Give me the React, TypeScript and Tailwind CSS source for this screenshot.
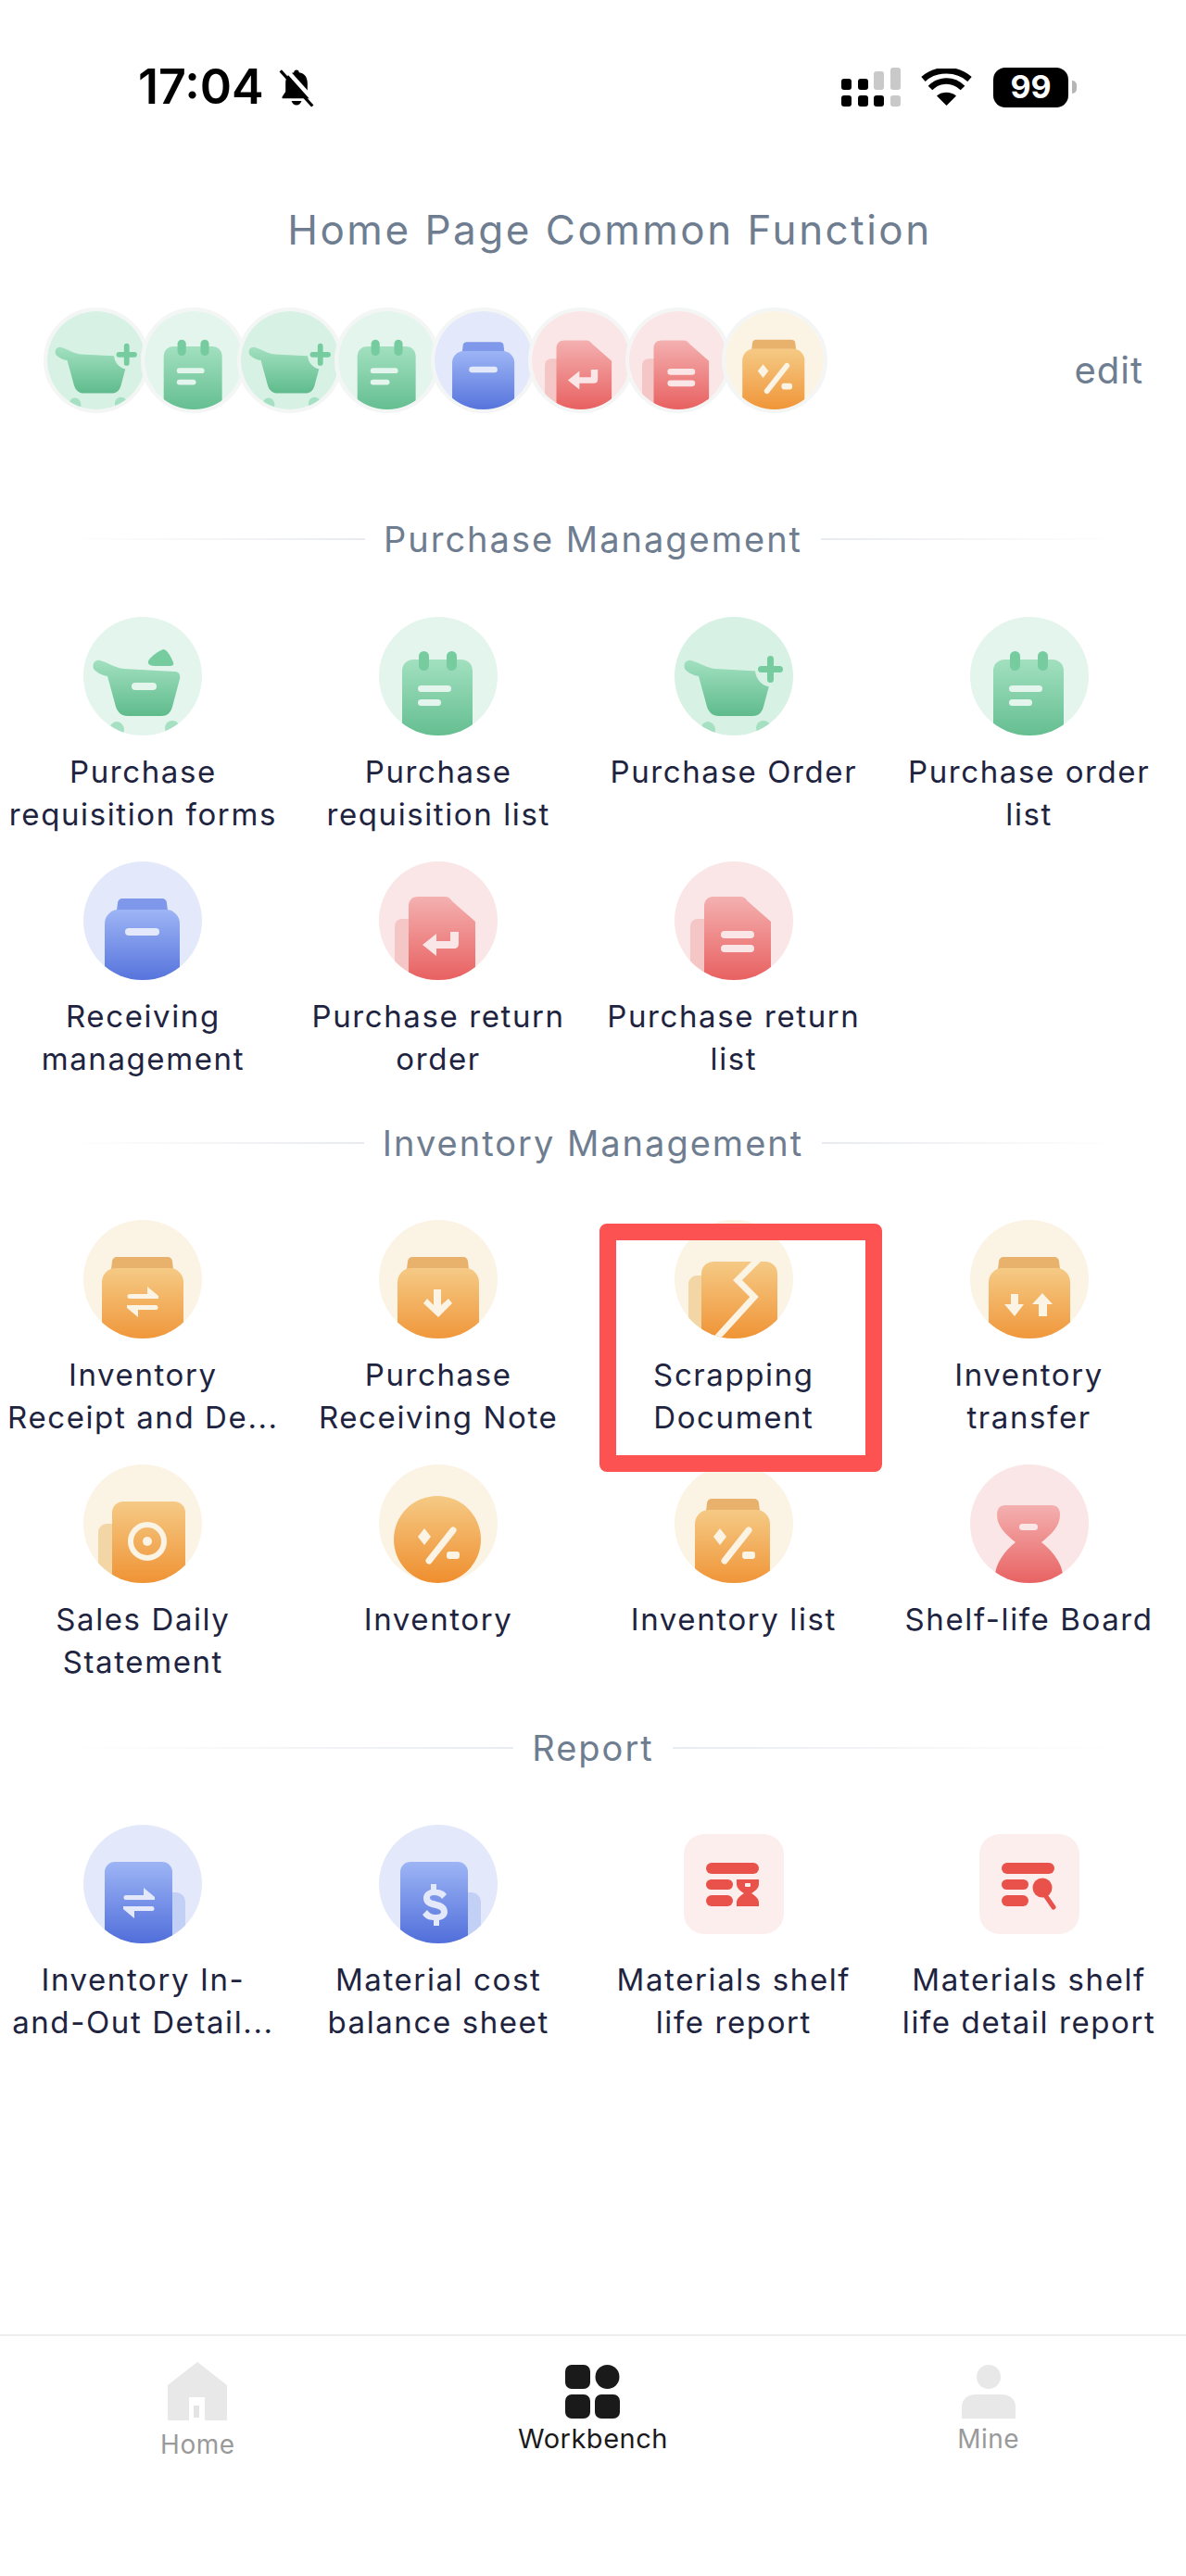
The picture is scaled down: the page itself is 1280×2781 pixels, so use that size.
import React, { useId } from "react";

type Tone = "green" | "greenLight" | "blue" | "red" | "orange";

const tones: Record<Tone, { bg: string; from: string; to: string; soft: string; lid: string }> = {
  green: { bg: "#d7f2e4", from: "#a2e0c0", to: "#5fbb8c", soft: "#a5e0c2", lid: "#76cc9f" },
  greenLight: { bg: "#e3f5ec", from: "#a2e0c0", to: "#5fbb8c", soft: "#a5e0c2", lid: "#76cc9f" },
  blue: { bg: "#e3e9fb", from: "#9db5f5", to: "#4a68d8", soft: "#c3d0f5", lid: "#7f98ea" },
  red: { bg: "#fae6e6", from: "#f4b0b0", to: "#e85f5f", soft: "#f5c6c6", lid: "#ee9d9d" },
  orange: { bg: "#fbf3e4", from: "#f5ca85", to: "#ef8e2e", soft: "#f3d6a6", lid: "#e9b26c" },
};

type Kind =
  | "cartLeaf"
  | "cartPlus"
  | "calendar"
  | "jarMinus"
  | "docReturn"
  | "docList"
  | "jarSwap"
  | "jarDown"
  | "scrap"
  | "jarUpDown"
  | "sales"
  | "eggPercent"
  | "jarPercent"
  | "hourglass"
  | "docSwap"
  | "docDollar";

const toneOf: Record<Kind, Tone> = {
  cartLeaf: "greenLight",
  cartPlus: "green",
  calendar: "greenLight",
  jarMinus: "blue",
  docReturn: "red",
  docList: "red",
  jarSwap: "orange",
  jarDown: "orange",
  scrap: "orange",
  jarUpDown: "orange",
  sales: "orange",
  eggPercent: "orange",
  jarPercent: "orange",
  hourglass: "red",
  docSwap: "blue",
  docDollar: "blue",
};

const Percent = ({ c }: { c: string }) => (
  <g fill={c}>
    <path d="M49 69l7 9-7 9-7-9z" />
    <path d="M80 71L54 104" stroke={c} strokeWidth="7" strokeLinecap="round" />
    <rect x="73" y="94" width="14" height="8" rx="3" />
  </g>
);

const SwapArrows = ({ c, x, y }: { c: string; x: number; y: number }) => (
  <g transform={`translate(${x} ${y})`} fill={c}>
    <path d="M3 8h19V0l12 10v3H3a2.500 2.500 0 0 1 0-5z" />
    <path d="M31 25H12v8L0 23v-3h31a2.500 2.500 0 0 1 0 5z" />
  </g>
);

const Jar = ({ x, w, lx, lw, top, fill, lid }: { x: number; w: number; lx: number; lw: number; top: number; fill: string; lid: string }) => (
  <>
    <path d={`M${lx + 5} ${top}h${lw - 10}a5 5 0 0 1 5 5l1 8h-${lw + 2}l1-8a5 5 0 0 1 5-5z`} fill={lid} />
    <rect x={x} y={top + 12} width={w} height="90" rx="15" fill={fill} />
  </>
);

// the app's round icon art, in a 128 box
const FnIcon = ({ kind, size = 128 }: { kind: Kind; size?: number }) => {
  const id = useId();
  const t = tones[toneOf[kind]];
  const g = `url(#${id}g)`;
  const bg = t.bg;

  const art = () => {
    switch (kind) {
      case "cartLeaf":
      case "cartPlus":
        return (
          <>
            <path
              d="M18 47C26 49 34 55 44 56L98 59C103 59 105 62 104 67L96 97C94 104 90 107 84 107H48C41 107 37 103 35 97L26 64C20 63 14 60 11 56C9 50 13 46 18 47z"
              fill={g}
            />
            <ellipse cx="36" cy="122" rx="8" ry="9" fill={t.soft} />
            <ellipse cx="96" cy="120" rx="8" ry="8" fill={t.soft} />
            {kind === "cartLeaf" ? (
              <>
                <path d="M71 46c3-4 10-9 15-11 4 0 8 7 11 14 1 3-1 4-4 4H77c-6 0-9-3-6-7z" fill={t.lid} />
                <rect x="52" y="71" width="27" height="8" rx="4" fill={bg} />
              </>
            ) : (
              <>
                <circle cx="106" cy="57" r="19" fill={bg} />
                <path d="M100 45.500a3.500 3.500 0 0 1 7 0V53h6.500a3.500 3.500 0 0 1 0 7H107v7.500a3.500 3.500 0 0 1-7 0V60h-6.500a3.500 3.500 0 0 1 0-7h6.500z" fill={t.lid} />
              </>
            )}
          </>
        );
      case "calendar":
        return (
          <>
            <rect x="25" y="46" width="76" height="90" rx="12" fill={g} />
            <rect x="43" y="37" width="11" height="21" rx="5.500" fill={t.lid} />
            <rect x="73" y="37" width="11" height="21" rx="5.500" fill={t.lid} />
            <rect x="42" y="74" width="36" height="7" rx="3.500" fill={bg} />
            <rect x="42" y="89" width="25" height="7" rx="3.500" fill={bg} />
          </>
        );
      case "jarMinus":
        return (
          <>
            <Jar x={23} w={81} lx={37} lw={53} top={40} fill={g} lid={t.lid} />
            <rect x="45" y="72" width="37" height="8" rx="4" fill={bg} />
          </>
        );
      case "docReturn":
      case "docList":
        return (
          <>
            <rect x="17" y="62" width="30" height="70" rx="8" fill={t.soft} />
            <path d="M42 38h29c4 0 6 2 8 5l25 22v65H32V48c0-6 4-10 10-10z" fill={g} />
            {kind === "docReturn" ? (
              <path d="M86 76v13c0 3-2 5-5 5H62v8L47 90l15-12v8h15V76z" fill={bg} />
            ) : (
              <>
                <rect x="50" y="75" width="36" height="8" rx="4" fill={bg} />
                <rect x="50" y="90" width="36" height="8" rx="4" fill={bg} />
              </>
            )}
          </>
        );
      case "jarSwap":
      case "jarDown":
      case "jarUpDown":
        return (
          <>
            <Jar x={20} w={88} lx={31} lw={65} top={40} fill={g} lid={t.lid} />
            {kind === "jarSwap" && <SwapArrows c={bg} x={47} y={72} />}
            {kind === "jarDown" && <path d="M59 75h8v17l8-7 4 5-15 15-16-15 4-5 7 7z" fill={bg} />}
            {kind === "jarUpDown" && (
              <>
                <path d="M44 80h8v11h6L48 104 37 91h7z" fill={bg} />
                <path d="M74 104h9V91h6L78 79 67 91h7z" fill={bg} />
              </>
            )}
          </>
        );
      case "scrap":
        return (
          <>
            <rect x="15" y="60" width="30" height="72" rx="9" fill={t.soft} />
            <rect x="29" y="45" width="82" height="92" rx="13" fill={g} />
            <path d="M91 42L68 65l18 18-40 44" fill="none" stroke={bg} strokeWidth="7" />
          </>
        );
      case "sales":
        return (
          <>
            <rect x="16" y="64" width="30" height="70" rx="9" fill={t.soft} />
            <rect x="31" y="40" width="79" height="96" rx="12" fill={g} />
            <circle cx="69" cy="83" r="18" fill="none" stroke={bg} strokeWidth="6" />
            <circle cx="69" cy="83" r="5" fill={bg} />
          </>
        );
      case "eggPercent":
        return (
          <>
            <circle cx="63" cy="81" r="47" fill={g} />
            <Percent c={bg} />
          </>
        );
      case "jarPercent":
        return (
          <>
            <Jar x={22} w={81} lx={35} lw={56} top={37} fill={g} lid={t.lid} />
            <Percent c={bg} />
          </>
        );
      case "hourglass":
        return (
          <>
            <path
              d="M38 44h50c6 0 9 4 9 10 0 13-9 21-20 30 12 9 23 24 23 36v12H27v-12c0-12 10-27 22-36-11-9-20-17-20-30 0-6 3-10 9-10z"
              fill={g}
            />
            <rect x="53" y="64" width="20" height="7" rx="3.500" fill={bg} />
          </>
        );
      case "docSwap":
      case "docDollar":
        return (
          <>
            <rect x="70" y="73" width="40" height="60" rx="10" fill={t.soft} />
            <rect x="23" y="40" width="73" height="96" rx="11" fill={g} />
            {kind === "docSwap" ? (
              <SwapArrows c={bg} x={43} y={68} />
            ) : (
              <path
                d="M56 64h6v6c5 0 9 2 11 5l-5 5c-2-3-5-4-8-4-4 0-5 1-5 3 0 5 19 2 19 15 0 5-4 8-9 9v6h-6v-6c-6 0-10-3-12-6l5-5c2 3 5 5 9 5s6-1 6-3c0-6-19-2-19-15 0-5 4-8 8-9z"
                fill={bg}
              />
            )}
          </>
        );
    }
  };

  return (
    <svg width={size} height={size} viewBox="0 0 128 128" className="block">
      <defs>
        <linearGradient id={`${id}g`} x1="0" y1="0" x2="0" y2="1">
          <stop offset="0" stopColor={t.from} />
          <stop offset="1" stopColor={t.to} />
        </linearGradient>
        <clipPath id={`${id}c`}>
          <circle cx="64" cy="64" r="64" />
        </clipPath>
      </defs>
      <circle cx="64" cy="64" r="64" fill={bg} />
      <g clipPath={`url(#${id}c)`}>{art()}</g>
    </svg>
  );
};

const ReportIcon = ({ search }: { search?: boolean }) => (
  <div className="flex h-[128px] items-center justify-center">
    <svg width="108" height="108" viewBox="0 0 108 108" className="block">
      <rect width="108" height="108" rx="22" fill="#fdeeee" />
      <g fill="#e9524a">
        <rect x="24" y="31" width="57" height="12" rx="6" />
        <rect x="24" y="49" width="29" height="11" rx="5.500" />
        <rect x="24" y="66" width="29" height="12" rx="6" />
        {search ? (
          <>
            <circle cx="68" cy="58" r="10.500" />
            <path d="M71 66l9 13" stroke="#e9524a" strokeWidth="5" strokeLinecap="round" />
          </>
        ) : (
          <path d="M57 49h24v5c0 5-5 8-8 10 3 2 8 5 8 10v4H57v-4c0-5 5-8 8-10-3-2-8-5-8-10z" />
        )}
      </g>
      {!search && <rect x="66" y="53" width="6" height="4" rx="1" fill="#fdeeee" />}
    </svg>
  </div>
);

const Cell = ({ icon, lines }: { icon: React.ReactNode; lines: string[] }) => (
  <div className="flex h-[264px] flex-col items-center">
    {icon}
    <div className="mt-[16px] text-center text-[33px] leading-[46px] tracking-[1.6px] whitespace-nowrap text-[#1e2440]">
      {lines.map((l) => (
        <div key={l}>{l}</div>
      ))}
    </div>
  </div>
);

const Grid = ({ items }: { items: { kind?: Kind; report?: "hourglass" | "search"; lines: string[] }[] }) => (
  <div className="ml-[-5px] grid w-[1275px] grid-cols-4">
    {items.map((it) => (
      <Cell
        key={it.lines.join(" ")}
        lines={it.lines}
        icon={it.kind ? <FnIcon kind={it.kind} /> : <ReportIcon search={it.report === "search"} />}
      />
    ))}
  </div>
);

const SectionTitle = ({ title }: { title: string }) => (
  <div className="flex h-[46px] items-center justify-center gap-[20px] px-[70px]">
    <div className="h-[2px] flex-1 bg-gradient-to-r from-white to-[#e8ebef]" />
    <div className="text-[38px] leading-[46px] tracking-[2px] text-[#6f7d90]">{title}</div>
    <div className="h-[2px] flex-1 bg-gradient-to-r from-[#e8ebef] to-white" />
  </div>
);

const StatusBar = () => (
  <div className="flex h-[188px] items-start justify-between pt-[72px] pr-[118px] pl-[149px]">
    <div className="flex h-[44px] items-center gap-[15px]">
      <span className="text-[52px] leading-none font-semibold text-black">17:04</span>
      <svg width="40" height="43" viewBox="0 0 44 44">
        <path d="M22 1c2 0 3 1 3 3 7 1 10 6 10 13v10l4 6v2H5v-2l4-6V17C9 10 12 5 19 4c0-2 1-3 3-3z" fill="#000" />
        <path d="M16 38h12c-1 3-3 5-6 5s-5-2-6-5z" fill="#000" />
        <path d="M9 0l35 39" stroke="#fff" strokeWidth="5" />
        <path d="M3 2l38 42" stroke="#000" strokeWidth="3.500" />
      </svg>
    </div>
    <div className="flex h-[44px] items-center">
      <svg width="64" height="42" viewBox="0 0 64 42">
        <g fill="#000">
          <rect x="0" y="12" width="11" height="12" rx="3" />
          <rect x="18" y="12" width="11" height="12" rx="3" />
          <rect x="0" y="30" width="11" height="12" rx="3" />
          <rect x="18" y="30" width="11" height="12" rx="3" />
          <rect x="35" y="30" width="11" height="12" rx="3" />
        </g>
        <g fill="#c9c9c9">
          <rect x="35" y="4" width="11" height="20" rx="3" />
          <rect x="53" y="0" width="11" height="24" rx="3" />
          <rect x="53" y="30" width="11" height="12" rx="3" />
        </g>
      </svg>
      <svg className="ml-[22px]" width="55" height="40" viewBox="0 0 55 40">
        <path d="M27.500 40L17 29.500c6-5 15-5 21 0z" fill="#000" />
        <path d="M10 21C20 11 35 11 45 21" fill="none" stroke="#000" strokeWidth="6.500" />
        <path d="M2.500 11.500C16 -1 39 -1 52.500 11.500" fill="none" stroke="#000" strokeWidth="6.500" />
      </svg>
      <div className="ml-[23px] flex items-center">
        <div className="flex h-[43px] w-[81px] items-center justify-center rounded-[13px] bg-black text-[34px] leading-none font-bold text-white">
          99
        </div>
        <div className="ml-[4px] h-[14px] w-[5px] rounded-r-full bg-[#b5b5b5]" />
      </div>
    </div>
  </div>
);

const TabBar = () => (
  <div className="mt-auto h-[261px] border-t-[2px] border-[#eeeeee]">
    <div className="grid grid-cols-3 pt-[28px]">
      <div className="flex flex-col items-center">
        <svg width="64" height="63" viewBox="0 0 64 63">
          <path d="M32 0L64 25v38H40V38H23v25H0V25z" fill="#e8e8e8" />
          <rect x="28" y="47" width="6" height="13" fill="#e4e4e4" />
        </svg>
        <span className="mt-[9px] text-[28px] leading-[34px] tracking-[0.5px] text-[#9a9a9a]">Home</span>
      </div>
      <div className="flex flex-col items-center pt-[3px]">
        <svg width="59" height="58" viewBox="0 0 59 58">
          <g fill="#1a1a1a">
            <rect x="0" y="0" width="27" height="26" rx="7" />
            <circle cx="45.500" cy="13" r="13" />
            <rect x="0" y="32" width="27" height="26" rx="7" />
            <rect x="32" y="32" width="27" height="26" rx="7" />
          </g>
        </svg>
        <span className="mt-[5px] text-[29px] leading-[34px] tracking-[0.5px] text-[#1a1a1a]">Workbench</span>
      </div>
      <div className="flex flex-col items-center pt-[3px]">
        <svg width="58" height="58" viewBox="0 0 58 58">
          <ellipse cx="29" cy="13" rx="13" ry="13" fill="#e8e8e8" />
          <path d="M0 58V45c0-9 8-13 15-13h28c7 0 15 4 15 13v13z" fill="#e8e8e8" />
        </svg>
        <span className="mt-[5px] text-[28px] leading-[34px] tracking-[0.5px] text-[#9a9a9a]">Mine</span>
      </div>
    </div>
  </div>
);

const common: Kind[] = ["cartPlus", "calendar", "cartPlus", "calendar", "jarMinus", "docReturn", "docList", "jarPercent"];

export default function App() {
  return (
    <div className="relative flex h-[2781px] w-[1280px] flex-col overflow-hidden bg-white font-['Inter',sans-serif]">
      <StatusBar />

      <div className="mt-[36px] pl-[36px] text-center text-[44px] leading-[48px] tracking-[2.5px] text-[#6f7d90]">
        Home Page Common Function
      </div>

      <div className="mt-[60px] flex items-center justify-between pr-[46px] pl-[47px]">
        <div className="flex">
          {common.map((k, i) => (
            <div key={i} className="mr-[-9.4px] rounded-full border-[4px] border-[#f4f5f5] bg-white">
              <FnIcon kind={k} size={106} />
            </div>
          ))}
        </div>
        <span className="mt-[22px] text-[40px] leading-[46px] tracking-[1px] text-[#6f7d90]">edit</span>
      </div>

      <div className="mt-[113px]">
        <SectionTitle title="Purchase Management" />
      </div>
      <div className="mt-[61px]">
        <Grid
          items={[
            { kind: "cartLeaf", lines: ["Purchase", "requisition forms"] },
            { kind: "calendar", lines: ["Purchase", "requisition list"] },
            { kind: "cartPlus", lines: ["Purchase Order"] },
            { kind: "calendar", lines: ["Purchase order", "list"] },
            { kind: "jarMinus", lines: ["Receiving", "management"] },
            { kind: "docReturn", lines: ["Purchase return", "order"] },
            { kind: "docList", lines: ["Purchase return", "list"] },
          ]}
        />
      </div>

      <div className="mt-[17px]">
        <SectionTitle title="Inventory Management" />
      </div>
      <div className="mt-[60px]">
        <Grid
          items={[
            { kind: "jarSwap", lines: ["Inventory", "Receipt and De..."] },
            { kind: "jarDown", lines: ["Purchase", "Receiving Note"] },
            { kind: "scrap", lines: ["Scrapping", "Document"] },
            { kind: "jarUpDown", lines: ["Inventory", "transfer"] },
            { kind: "sales", lines: ["Sales Daily", "Statement"] },
            { kind: "eggPercent", lines: ["Inventory"] },
            { kind: "jarPercent", lines: ["Inventory list"] },
            { kind: "hourglass", lines: ["Shelf-life Board"] },
          ]}
        />
      </div>

      <div className="mt-[19px]">
        <SectionTitle title="Report" />
      </div>
      <div className="mt-[60px]">
        <Grid
          items={[
            { kind: "docSwap", lines: ["Inventory In-", "and-Out Detail..."] },
            { kind: "docDollar", lines: ["Material cost", "balance sheet"] },
            { report: "hourglass", lines: ["Materials shelf", "life report"] },
            { report: "search", lines: ["Materials shelf", "life detail report"] },
          ]}
        />
      </div>

      <TabBar />

      {/* red annotation box drawn over the screenshot */}
      <div className="absolute top-[1321px] left-[647px] h-[268px] w-[305px] rounded-[8px] border-[18px] border-[#fd5252]" />
    </div>
  );
}
